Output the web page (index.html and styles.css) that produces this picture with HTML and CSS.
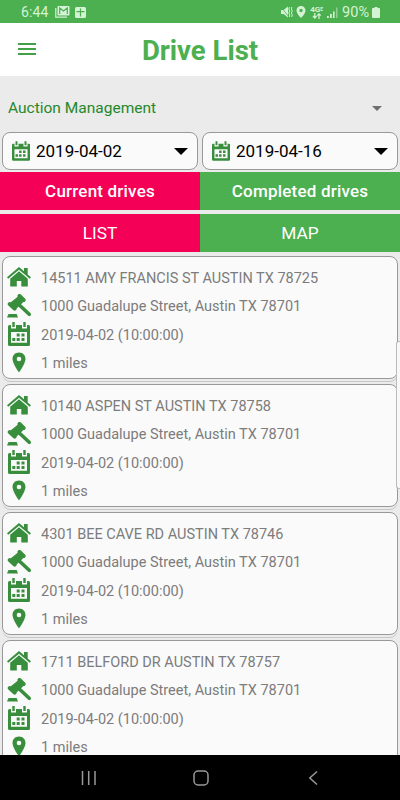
FILE: index.html
```
<!DOCTYPE html>
<html lang="en">
<head>
  <meta charset="UTF-8">
  <meta name="viewport" content="width=device-width, initial-scale=1.0">
  <title>Drive List</title>
  <link rel="stylesheet" href="styles.css">
</head>
<body>
  <!-- Shared icons -->
  <svg class="sprite" aria-hidden="true">
    <symbol id="house" viewBox="0 0 24 20">
      <path d="M12 0 17 4.200V1h3.700v6.400L24 10.300 22.800 11.700 12 2.700 1.200 11.700 0 10.300z"/>
      <path d="M12 4.300 20.800 11.700V19.500H14.300V14H9.800v5.500H3.200v-7.800z"/>
    </symbol>
    <symbol id="gavel" viewBox="0 0 24 24">
      <path d="M11 2.500 16.500 8 9.500 14.500 3.500 8.500z"/>
      <path d="M12.500 2 16.600 6M2.700 10 7.600 14.600" fill="none" stroke="#388e3c" stroke-width="4" stroke-linecap="round"/>
      <path d="M11 9.800 22.200 20.300" fill="none" stroke="#388e3c" stroke-width="3.600" stroke-linecap="round"/>
      <path d="M1.500 20h8.200L11 23.500H0z"/>
    </symbol>
    <symbol id="calendar" viewBox="0 0 22 24">
      <path fill-rule="evenodd" d="M1.500 3H3v3.500h5V3h6v3.500h5V3h1.500Q22 3 22 4.500v18Q22 24 20.500 24h-19Q0 24 0 22.500v-18Q0 3 1.500 3zM3 10v10.800h16V10z"/>
      <path d="M4.300 0h2.400v5H4.300zM15.300 0h2.400v5h-2.400zM8.700 11.500h3v3h-3zM13.500 11.500h3v3h-3zM4.300 16h3v3h-3zM8.700 16h3v3h-3zM13.500 16h3v3h-3z"/>
    </symbol>
    <symbol id="pin" viewBox="0 0 14 20">
      <path fill-rule="evenodd" d="M7 0C3 0 .5 2.900.5 6.500.5 11 7 20 7 20s6.500-9 6.500-13.500C13.500 2.900 11 0 7 0zm0 4.200a2.300 2.300 0 1 1 0 4.600 2.300 2.300 0 0 1 0-4.600z"/>
    </symbol>
  </svg>

  <div class="phone">
    <div class="status-bar">
      <span class="clock">6:44</span>
      <svg class="mail" width="15" height="12" viewBox="0 0 15 12">
        <path d="M.8 2v9.200H12" fill="none" stroke="currentColor" stroke-width="1.200"/>
        <rect x="2.500" width="12" height="9.500" rx="1"/>
        <path d="M4.700 8V2l3.800 3 3.800-3v6" fill="none" stroke="#4caf50" stroke-width="1.200"/>
      </svg>
      <svg class="plus" width="11" height="11" viewBox="0 0 11 11">
        <rect width="11" height="11" rx="1.500"/>
        <path d="M5.500 1.500v8M1.500 4.700h8" stroke="#4caf50" stroke-width="1.200"/>
      </svg>
      <div class="status-right">
        <svg width="12" height="12" viewBox="0 0 12 12">
          <path d="M0 4h2.500L7 .5v11L2.500 8H0z"/>
          <path d="M0 1l8 10" stroke="#4caf50" stroke-width=".8"/>
          <path d="M8.500 1 7.800 3l1 2-1 2 1 2-.6 2M11 1l-.7 2 1 2-1 2 1 2-.6 2" fill="none" stroke="currentColor"/>
        </svg>
        <svg width="10" height="12" viewBox="0 0 10 12">
          <path fill-rule="evenodd" d="M5 0a4.500 4.500 0 0 0-4.500 4.500C.5 7.500 5 12 5 12s4.500-4.500 4.500-7.500A4.500 4.500 0 0 0 5 0zm0 2.800a1.700 1.700 0 1 1 0 3.400 1.700 1.700 0 0 1 0-3.400z"/>
        </svg>
        <div class="network">
          <span>4G<small>E</small></span>
          <svg width="10" height="6" viewBox="0 0 10 6">
            <path d="M2.800 0v4M7 6V1.500M1 3l1.800 2L4.600 3M5.200 2.600 7 .8l1.800 1.800" fill="none" stroke="currentColor" stroke-width="1.200"/>
          </svg>
        </div>
        <svg class="signal" width="11" height="11" viewBox="0 0 11 11">
          <path d="M0 9h1.800v2H0zM3 7h1.800v4H3zM6 4.500h1.600V11H6z"/>
          <path d="M9 .5h1.500V11H9z" opacity=".5"/>
        </svg>
        <span class="battery-level">90%</span>
        <svg width="8" height="11" viewBox="0 0 8 11">
          <path d="M2.500 0h3v1H7q1 0 1 1v8q0 1-1 1H1q-1 0-1-1V2q0-1 1-1h1.500z"/>
        </svg>
      </div>
    </div>

    <header class="header">
      <button type="button" class="menu-btn" aria-label="Menu"><i></i><i></i><i></i></button>
      <h1>Drive List</h1>
    </header>

    <!-- Filters -->
    <div class="category">
      <span>Auction Management</span>
      <i class="arrow"></i>
    </div>
    <div class="dates">
      <div class="date">
        <svg><use href="#calendar"/></svg>
        <span>2019-04-02</span>
        <i class="arrow"></i>
      </div>
      <div class="date">
        <svg><use href="#calendar"/></svg>
        <span>2019-04-16</span>
        <i class="arrow"></i>
      </div>
    </div>
    <div class="tabs drives">
      <div class="tab active">Current drives</div>
      <div class="tab">Completed drives</div>
    </div>
    <div class="tabs views">
      <div class="tab active">LIST</div>
      <div class="tab">MAP</div>
    </div>

    <!-- Drive list -->
    <main class="list">
      <div class="card">
        <div class="row address"><svg class="house"><use href="#house"/></svg><span>14511 AMY FRANCIS ST AUSTIN TX 78725</span></div>
        <div class="row place"><svg class="gavel"><use href="#gavel"/></svg><span>1000 Guadalupe Street, Austin TX 78701</span></div>
        <div class="row time"><svg class="calendar"><use href="#calendar"/></svg><span>2019-04-02 (10:00:00)</span></div>
        <div class="row"><svg class="pin"><use href="#pin"/></svg><span>1 miles</span></div>
      </div>
      <div class="card">
        <div class="row address"><svg class="house"><use href="#house"/></svg><span>10140 ASPEN ST AUSTIN TX 78758</span></div>
        <div class="row place"><svg class="gavel"><use href="#gavel"/></svg><span>1000 Guadalupe Street, Austin TX 78701</span></div>
        <div class="row time"><svg class="calendar"><use href="#calendar"/></svg><span>2019-04-02 (10:00:00)</span></div>
        <div class="row"><svg class="pin"><use href="#pin"/></svg><span>1 miles</span></div>
      </div>
      <div class="card">
        <div class="row address"><svg class="house"><use href="#house"/></svg><span>4301 BEE CAVE RD AUSTIN TX 78746</span></div>
        <div class="row place"><svg class="gavel"><use href="#gavel"/></svg><span>1000 Guadalupe Street, Austin TX 78701</span></div>
        <div class="row time"><svg class="calendar"><use href="#calendar"/></svg><span>2019-04-02 (10:00:00)</span></div>
        <div class="row"><svg class="pin"><use href="#pin"/></svg><span>1 miles</span></div>
      </div>
      <div class="card">
        <div class="row address"><svg class="house"><use href="#house"/></svg><span>1711 BELFORD DR AUSTIN TX 78757</span></div>
        <div class="row place"><svg class="gavel"><use href="#gavel"/></svg><span>1000 Guadalupe Street, Austin TX 78701</span></div>
        <div class="row time"><svg class="calendar"><use href="#calendar"/></svg><span>2019-04-02 (10:00:00)</span></div>
        <div class="row"><svg class="pin"><use href="#pin"/></svg><span>1 miles</span></div>
      </div>
      <div class="edge-handle"></div>
    </main>

    <nav class="nav-bar">
      <svg width="16" height="16" viewBox="0 0 16 16"><path d="M1.500 1v14M7.700 1v14M14 1v14"/></svg>
      <svg width="16" height="16" viewBox="0 0 16 16"><rect x="1" y="1" width="14" height="14" rx="4"/></svg>
      <svg width="16" height="16" viewBox="0 0 16 16"><path d="M12 1.500 4.800 8 12 14.500"/></svg>
    </nav>
  </div>
</body>
</html>
```
FILE: styles.css
```
* {
  margin: 0;
  padding: 0;
  box-sizing: border-box;
  font-family: Roboto, sans-serif;
}

body {
  background: #ebebeb;
}

.sprite {
  display: none;
}

.phone {
  width: 400px;
  height: 800px;
  display: flex;
  flex-direction: column;
  overflow: hidden;
}

.status-bar {
  height: 23px;
  flex: none;
  display: flex;
  align-items: center;
  background: #4caf50;
  color: #d4f3d5;
  padding: 1px 20px 0 21px;
  font-size: 14px;
}

.status-bar svg {
  fill: currentColor;
  flex: none;
}

.clock {
  width: 34px;
  letter-spacing: 0.1px;
}

.plus {
  margin-left: 5px;
}

.status-right {
  display: flex;
  align-items: center;
  margin-left: auto;
}

.status-right > svg {
  margin-right: 3px;
}

.network {
  width: 15px;
  height: 13px;
  display: flex;
  flex-direction: column;
  align-items: center;
  font-size: 8px;
  line-height: 7px;
  font-weight: 700;
  white-space: nowrap;
}

.network small {
  font-size: 5px;
  vertical-align: top;
}

.status-right .signal {
  margin: 0 4px 0 3px;
}

.battery-level {
  margin-right: 3px;
  font-size: 14.5px;
}

.status-right > svg:last-child {
  margin-right: 0;
}

.header {
  height: 53px;
  flex: none;
  display: grid;
  grid-template-columns: 54px 1fr 54px;
  align-items: center;
  background: #fff;
}

.menu-btn {
  display: flex;
  flex-direction: column;
  gap: 3px;
  width: 18px;
  margin: -2px 0 0 18px;
  border: none;
  background: none;
}

.menu-btn i {
  height: 2px;
  width: 18px;
  background: #43a047;
}

h1 {
  color: #4caf50;
  font-size: 27.5px;
  font-weight: 700;
  text-align: center;
  padding-top: 2px;
}

.category {
  height: 56px;
  flex: none;
  display: flex;
  align-items: center;
  justify-content: space-between;
  padding: 8px 18px 0 8px;
  color: #25882b;
  font-size: 15.5px;
}

.arrow {
  border: 5px solid transparent;
  border-top-color: #707070;
  border-bottom: none;
}

.dates {
  display: grid;
  grid-template-columns: 1fr 1fr;
  gap: 4px;
  padding: 0 2px;
  height: 40px;
  flex: none;
}

.date {
  height: 38px;
  display: flex;
  align-items: center;
  border: 1px solid #999;
  border-radius: 8px;
  background: #fafafa;
  padding: 0 9px;
  font-size: 17px;
}

.date svg {
  width: 18px;
  height: 20px;
  fill: #388e3c;
  margin-right: 6px;
}

.date .arrow {
  border-width: 7px;
  border-top-color: #000;
  border-bottom: none;
  margin-left: auto;
}

.tabs {
  display: grid;
  grid-template-columns: 1fr 1fr;
  height: 38px;
  flex: none;
  color: #fff;
  text-align: center;
}

.tab {
  background: #4caf50;
  line-height: 38px;
}

.tab.active {
  background: #f50057;
}

.drives {
  font-size: 17px;
  font-weight: 500;
  letter-spacing: 0.2px;
}

.views {
  margin-top: 4px;
  font-size: 17.3px;
}

.list {
  position: relative;
  flex: 1;
  min-height: 0;
  overflow: hidden;
  padding: 4px 2px 0;
}

.card {
  height: 123px;
  margin-bottom: 5px;
  border: 1px solid #999;
  border-radius: 8px;
  background: #fafafa;
  padding: 7px 4px;
  box-shadow: 0 3px 0 -1px #ebebeb, 0 4px 0 -1px #c8c8c8;
}

.row {
  height: 28.5px;
  display: grid;
  grid-template-columns: 24px 1fr;
  column-gap: 10px;
  align-items: center;
  justify-items: center;
  color: #7c7c7c;
  font-size: 14.5px;
}

.row span {
  justify-self: start;
  white-space: nowrap;
}

.row svg {
  fill: #388e3c;
  margin-top: -2px;
}

.house {
  width: 24px;
  height: 20px;
}

.gavel {
  width: 24px;
  height: 24px;
}

.calendar {
  width: 22px;
  height: 24px;
}

.pin {
  width: 14px;
  height: 21px;
}

/* Edge panel handle floats over the cards */
.edge-handle {
  position: absolute;
  top: 89px;
  right: 0;
  width: 4px;
  height: 148px;
  background: #f8f8f8;
  border: 1px solid #bbb;
  border-right: none;
  border-radius: 3px 0 0 3px;
}

.nav-bar {
  height: 45px;
  flex: none;
  display: flex;
  align-items: center;
  justify-content: space-between;
  padding: 1px 79px 0 81px;
  background: #000;
}

.nav-bar svg {
  fill: none;
  stroke: #999;
  stroke-width: 1.5;
}
```
